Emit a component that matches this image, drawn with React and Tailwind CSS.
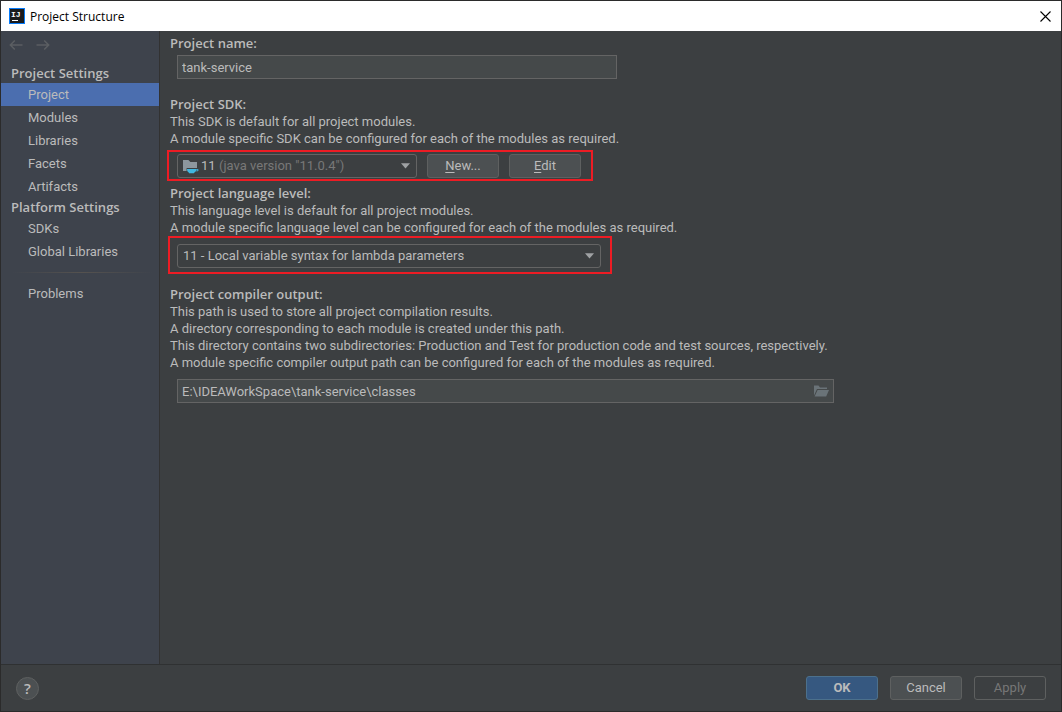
import React from "react";

const platformItems = ["SDKs", "Global Libraries"];
const projectItems = ["Project", "Modules", "Libraries", "Facets", "Artifacts"];

function NavItem({ label, active }) {
  return (
    <li>
      <a
        href={"#" + label.toLowerCase().replace(" ", "-")}
        aria-current={active ? "page" : undefined}
        className={
          "block h-[23px] pl-[27px] leading-[23px] " +
          (active ? "bg-[#4b6eaf]" : "hover:bg-[#4a4f59]")
        }
      >
        {label}
      </a>
    </li>
  );
}

function Heading({ children, htmlFor }) {
  return (
    <label htmlFor={htmlFor} className="block font-['Open_Sans',sans-serif] font-semibold">
      {children}
    </label>
  );
}

function Caret() {
  return (
    <svg className="pointer-events-none absolute top-[9px] right-[6px]" width="10" height="6" viewBox="0 0 10 6" aria-hidden="true">
      <path d="M0 .3h9L4.500 5.600z" fill="#9fa2a4" />
    </svg>
  );
}

function SdkIcon() {
  return (
    <svg className="pointer-events-none absolute top-[4px] left-[5px]" width="18" height="16" viewBox="0 0 18 16" aria-hidden="true">
      <path d="M1 2h5.400l2 2H15v6H4.600v3H1z" fill="#8d979e" />
      <path d="M5 11h10.600c.6 0 .9.3.9.9 0 .8-.5 1.300-1.300 1.300h-1.500c-.5.7-1 1.200-1.700 1.500v.6H7v-.6C5.600 14 5 12.800 5 11z" fill="#40b6e0" />
      <path d="M14 11.700h1.400v.7H14z" fill="#3c3f41" />
    </svg>
  );
}

function Button({ children, className, ...rest }) {
  return (
    <button
      type="button"
      className={"h-6 w-[72px] rounded-[3px] border text-center leading-[22px] " + className}
      {...rest}
    >
      {children}
    </button>
  );
}

const plain = "border-[#5e6060] bg-[#4c5052]";

export default function App() {
  return (
    <div className="flex min-h-screen flex-col border border-[#2b2b2b] bg-[#3c3f41] font-['Roboto','Open_Sans',sans-serif] text-[13px] leading-[17px] text-[#bbbbbb]">
      <header className="flex h-[30px] items-center bg-white pr-[10px] pl-2 text-black">
        <svg width="16" height="16" viewBox="0 0 16 16" aria-hidden="true">
          <rect width="16" height="16" fill="#087cfa" />
          <rect x="1" y="1" width="14" height="14" fill="#1b1b1d" />
          <text x="2" y="9" fill="#fff" className="font-['Liberation_Mono',monospace] text-[8px] font-bold">IJ</text>
          <rect x="3" y="12" width="6" height="1" fill="#fff" />
        </svg>
        <h1 className="ml-[5px] grow font-['Open_Sans',sans-serif] text-[12px]">Project Structure</h1>
        <button type="button" aria-label="Close">
          <svg width="11" height="11" viewBox="0 0 11 11" aria-hidden="true">
            <path d="M.5.5l10 10M10.500.5l-10 10" stroke="#000" strokeWidth="1.1" />
          </svg>
        </button>
      </header>

      <div className="flex grow">
        <nav className="w-[159px] shrink-0 border-r border-[#323232] bg-[#3e434c]" aria-label="Settings">
          <div className="flex h-[33px] items-start gap-[13px] pt-2 pl-2 text-[#5b5e62]">
            <button type="button" aria-label="Back">
              <svg width="14" height="12" viewBox="0 0 14 12" fill="none" stroke="currentColor" strokeWidth="1.5" aria-hidden="true">
                <path d="M13.500 6H1.500M5.800 1.500L1.300 6l4.500 4.500" />
              </svg>
            </button>
            <button type="button" aria-label="Forward">
              <svg width="14" height="12" viewBox="0 0 14 12" fill="none" stroke="currentColor" strokeWidth="1.5" aria-hidden="true">
                <path d="M.5 6h12M8.200 1.500L12.700 6l-4.500 4.500" />
              </svg>
            </button>
          </div>
          <h2 className="h-[19px] pl-[10px] font-['Open_Sans',sans-serif] leading-[19px] font-semibold">Project Settings</h2>
          <ul>
            {projectItems.map((item) => (
              <NavItem key={item} label={item} active={item === "Project"} />
            ))}
          </ul>
          <h2 className="h-[19px] pl-[10px] font-['Open_Sans',sans-serif] leading-[19px] font-semibold">Platform Settings</h2>
          <ul>
            {platformItems.map((item) => (
              <NavItem key={item} label={item} />
            ))}
          </ul>
          <div className="my-[9px] mr-[6px] ml-[10px] h-px bg-linear-to-r from-transparent via-[#55524f] to-transparent" />
          <ul>
            <NavItem label="Problems" />
          </ul>
        </nav>

        <main className="min-w-0 grow pt-1">
          <section className="pl-[10px]">
            <Heading htmlFor="name">Project name:</Heading>
            <input
              id="name"
              defaultValue="tank-service"
              className="mt-[3px] ml-[7px] block h-6 w-[440px] border border-[#646464] bg-[#45494a] px-1"
            />
          </section>

          <section className="mt-[17px]">
            <div className="pl-[10px]">
              <Heading htmlFor="sdk">Project SDK:</Heading>
              <p>This SDK is default for all project modules.</p>
              <p>A module specific SDK can be configured for each of the modules as required.</p>
            </div>
            <div className="mt-[3px] ml-[7px] flex w-[426px] gap-[10px] border-2 border-[#ed1c24] px-2 pt-[2px] pb-px">
              <div className="relative w-[240px]">
                <select
                  id="sdk"
                  className="block h-6 w-full appearance-none rounded-[3px] border border-[#646464] bg-[#3c3f41] pl-[23px] leading-[22px]"
                >
                  <option>11</option>
                </select>
                <SdkIcon />
                <span className="pointer-events-none absolute top-[3px] left-[42px] text-[#787878]">(java version "11.0.4")</span>
                <Caret />
              </div>
              <Button className={plain}><span className="underline underline-offset-2">N</span>ew...</Button>
              <Button className={plain}><span className="underline underline-offset-2">E</span>dit</Button>
            </div>
          </section>

          <section className="mt-1">
            <div className="pl-[10px]">
              <Heading htmlFor="level">Project language level:</Heading>
              <p>This language level is default for all project modules.</p>
              <p>A module specific language level can be configured for each of the modules as required.</p>
            </div>
            <div className="ml-2 w-[444px] border-2 border-[#ed1c24] pt-[6px] pr-[9px] pb-1 pl-[7px]">
              <div className="relative">
                <select
                  id="level"
                  className="block h-6 w-full appearance-none rounded-[3px] border border-[#646464] bg-[#3c3f41] pl-[5px] leading-[22px]"
                >
                  <option>11 - Local variable syntax for lambda parameters</option>
                </select>
                <Caret />
              </div>
            </div>
          </section>

          <section className="mt-3 pl-[10px]">
            <Heading htmlFor="output">Project compiler output:</Heading>
            <p>This path is used to store all project compilation results.</p>
            <p>A directory corresponding to each module is created under this path.</p>
            <p>This directory contains two subdirectories: Production and Test for production code and test sources, respectively.</p>
            <p>A module specific compiler output path can be configured for each of the modules as required.</p>
            <div className="mt-2 ml-[7px] flex h-6 w-[657px] items-center border border-[#646464] bg-[#45494a] px-1">
              <input id="output" defaultValue="E:\IDEAWorkSpace\tank-service\classes" className="min-w-0 grow bg-transparent" />
              <button type="button" aria-label="Browse">
                <svg width="16" height="12" viewBox="0 0 16 12" fill="#6a7378" aria-hidden="true">
                  <path d="M1 .5h4.500l1.500 2h7v1.500H4L1 10.500z" />
                  <path d="M4.600 5H16l-2.800 6.500H1.600z" />
                </svg>
              </button>
            </div>
          </section>
        </main>
      </div>

      <footer className="flex h-[47px] items-center gap-3 border-t border-[#2f3132] px-[15px]">
        <button
          type="button"
          aria-label="Help"
          className="mr-auto size-[23px] rounded-full border border-[#5e6060] bg-[#4c5052] font-['Open_Sans',sans-serif] text-[15px] leading-[21px] font-semibold"
        >
          ?
        </button>
        <Button className="border-[#4c708c] bg-[#365880] font-bold">OK</Button>
        <Button className={plain}>Cancel</Button>
        <Button className="border-[#5e6060] text-[#777777]" disabled>Apply</Button>
      </footer>
    </div>
  );
}
